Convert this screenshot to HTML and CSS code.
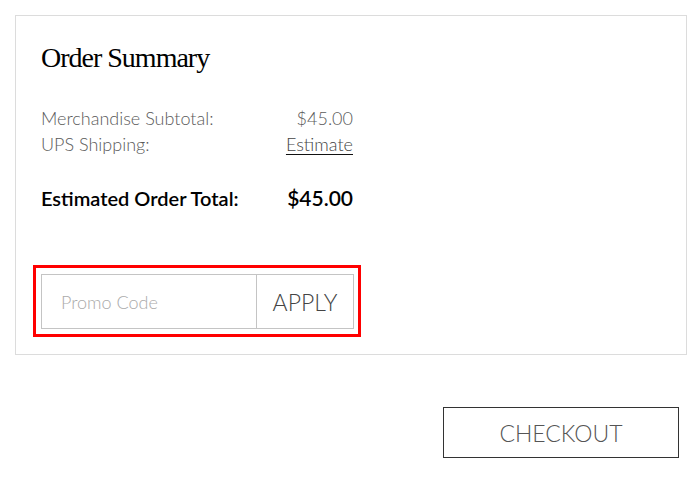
FILE: index.html
```html
<!DOCTYPE html>
<html>

	<head>
		<meta charset="utf-8" />
		<title>Order Summary</title>
		<link rel="stylesheet" href="styles.css">
	</head>

	<body>
		<section class="summary">
			<h2 class="summary-title">Order Summary</h2>
			<div class="summary-lines">
				<div class="line">
					<span>Merchandise Subtotal:</span>
					<span>$45.00</span>
				</div>
				<div class="line">
					<span>UPS Shipping:</span>
					<a href="#" class="estimate">Estimate</a>
				</div>
			</div>
			<div class="total">
				<span>Estimated Order Total:</span>
				<span class="total-value">$45.00</span>
			</div>
			<div class="promo-highlight">
				<form class="promo">
					<input type="text" class="promo-input" placeholder="Promo Code" />
					<button type="button" class="promo-apply">APPLY</button>
				</form>
			</div>
		</section>
		<div class="actions">
			<button type="button" class="checkout">CHECKOUT</button>
		</div>
	</body>

</html>
```

FILE: styles.css
```css
body {
	margin: 15px 13px 0 15px;
	font-family: "Lato", "Liberation Sans", sans-serif;
	background: #fff;
	color: #111;
}

.summary {
	border: 1px solid #dcdcdc;
	padding: 25px 25px 16px;
	height: 297px;
}

.summary-title {
	margin: 0;
	font-family: "Liberation Serif", serif;
	font-weight: normal;
	font-size: 28px;
	line-height: 34px;
	letter-spacing: -1px;
	color: #000;
}

.summary-lines {
	width: 312px;
	margin-top: 30px;
	font-weight: 300;
	font-size: 18px;
	line-height: 26px;
	color: #5a5a5a;
}

.line {
	display: flex;
	justify-content: space-between;
}

.estimate {
	color: #444;
	text-decoration: underline;
	text-decoration-color: #111;
	text-underline-offset: 3px;
}

.total {
	display: flex;
	justify-content: space-between;
	width: 312px;
	margin-top: 28px;
	font-weight: 600;
	font-size: 20px;
	line-height: 26px;
	color: #000;
}

.total-value {
	font-size: 21px;
}

.promo-highlight {
	display: inline-block;
	margin: 54px 0 0 -8px;
	padding: 6px 4px 5px 5px;
	border: 3px solid #f00;
}

.promo {
	display: flex;
	width: 311px;
	height: 53px;
	margin: 0;
	border: 1px solid #c4c4c4;
}

.promo-input {
	flex: 1;
	min-width: 0;
	border: none;
	border-right: 1px solid #c4c4c4;
	padding: 0 0 0 19px;
	font-family: "Lato", sans-serif;
	font-weight: 300;
	font-size: 18px;
	color: #333;
	outline: none;
}

.promo-input::placeholder {
	color: #aaa;
}

.promo-apply {
	width: 96px;
	border: none;
	background: #fff;
	font-family: "Lato", sans-serif;
	font-weight: 300;
	font-size: 23px;
	color: #444;
	padding: 0;
}

.actions {
	display: flex;
	justify-content: flex-end;
	margin-top: 52px;
	padding-right: 8px;
}

.checkout {
	width: 236px;
	height: 51px;
	border: 1.5px solid #333;
	background: #fff;
	font-family: "Lato", sans-serif;
	font-weight: 300;
	font-size: 23px;
	color: #555;
	padding: 0;
}
```
